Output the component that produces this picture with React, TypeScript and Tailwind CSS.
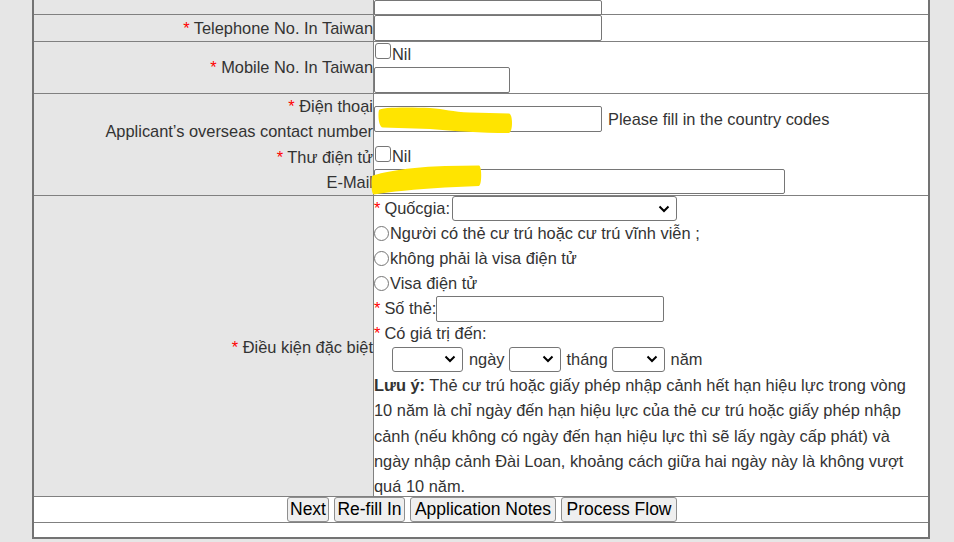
import React from 'react';

// ==================== 小元件 ====================
const Req: React.FC = () => <span className="text-[#f00]">*</span>;

const TextBox: React.FC<{ className: string }> = ({ className }) => (
  <input
    type="text"
    className={`block shrink-0 border border-[#767676] rounded-[2px] bg-white ${className}`}
  />
);

const Check: React.FC<{ className?: string }> = ({ className = '' }) => (
  <input
    type="checkbox"
    className={`appearance-none shrink-0 w-4 h-4 border border-[#767676] rounded-[3px] bg-white ${className}`}
  />
);

const Radio: React.FC = () => (
  <input
    type="radio"
    name="cond"
    className="appearance-none shrink-0 w-[15px] h-[15px] border border-[#767676] rounded-full bg-white mr-px"
  />
);

const Chevron: React.FC = () => (
  <svg
    className="absolute right-[6px] top-1/2 -translate-y-1/2"
    width="12"
    height="8"
    viewBox="0 0 12 8"
  >
    <path d="M1.5 1.5 L6 6 L10.5 1.5" fill="none" stroke="#000" strokeWidth="2" />
  </svg>
);

const Dropdown: React.FC<{ className: string }> = ({ className }) => (
  <div className={`relative shrink-0 border border-[#767676] rounded-[3px] bg-white ${className}`}>
    <select className="appearance-none w-full h-full bg-transparent outline-none" />
    <Chevron />
  </div>
);

const Row: React.FC<{
  label?: React.ReactNode;
  rowClass: string;
  cellClass?: string;
  children?: React.ReactNode;
}> = ({ label, rowClass, cellClass = '', children }) => (
  <div className={`grid grid-cols-[340px_554px] border-b border-[#808080] ${rowClass}`}>
    <div className="bg-[#e6e6e6] border-r border-[#808080] flex items-center justify-end text-right leading-[25px]">
      <div>{label}</div>
    </div>
    <div className={`bg-white ${cellClass}`}>{children}</div>
  </div>
);

const Btn: React.FC<{ w: string; children: React.ReactNode }> = ({ w, children }) => (
  <button
    className={`h-[25px] ${w} px-0 text-[17.5px] leading-none text-black bg-[#efefef] border border-[#8f8f8f] rounded-[3px]`}
  >
    {children}
  </button>
);

// ==================== 主畫面 ====================
const App: React.FC = () => {
  return (
    <div className="relative w-[954px] h-[542px] overflow-hidden bg-[#e6e6e6] font-['Liberation_Sans',Arial,sans-serif] text-[16.4px] text-[#333]">
      <div className="ml-[32px] w-[898px] border-x-2 border-b-2 border-[#737373] bg-white">
        {/* 上一列（被裁切） */}
        <Row rowClass="h-[15px] overflow-hidden" cellClass="flex items-end">
          <TextBox className="w-[228px] h-[26px]" />
        </Row>

        <Row
          rowClass="h-[27px]"
          label={
            <>
              <Req /> Telephone No. In Taiwan
            </>
          }
        >
          <TextBox className="w-[228px] h-[26px]" />
        </Row>

        <Row
          rowClass="h-[52px]"
          label={
            <>
              <Req /> Mobile No. In Taiwan
            </>
          }
        >
          <div className="flex items-start h-[25px]">
            <Check className="mt-px ml-px" />
            <span className="leading-[25px] ml-px">Nil</span>
          </div>
          <TextBox className="w-[136px] h-[26px]" />
        </Row>

        <Row
          rowClass="h-[50px]"
          cellClass="flex items-center"
          label={
            <>
              <Req /> Điện thoại
              <br />
              Applicant’s overseas contact number
            </>
          }
        >
          <TextBox className="w-[228px] h-[26px]" />
          <span className="ml-[6px]">Please fill in the country codes</span>
        </Row>

        <Row
          rowClass="h-[52px]"
          label={
            <>
              <Req /> Thư điện tử
              <br />
              E-Mail
            </>
          }
        >
          <div className="flex items-start h-[25px]">
            <Check className="mt-[2px] ml-px" />
            <span className="leading-[25px] ml-px">Nil</span>
          </div>
          <TextBox className="w-[411px] h-[25px]" />
        </Row>

        <Row
          rowClass="h-[301px] overflow-hidden"
          cellClass="leading-[25px]"
          label={
            <>
              <Req /> Điều kiện đặc biệt
            </>
          }
        >
          <div className="flex items-center h-[25px]">
            <Req />
            <span className="ml-[4px] mr-[2px]">Quốcgia:</span>
            <Dropdown className="w-[225px] h-[25px]" />
          </div>
          <div className="flex items-center h-[25px]">
            <Radio />
            <span>Người có thẻ cư trú hoặc cư trú vĩnh viễn ;</span>
          </div>
          <div className="flex items-center h-[25px]">
            <Radio />
            <span>không phải là visa điện tử</span>
          </div>
          <div className="flex items-center h-[25px]">
            <Radio />
            <span>Visa điện tử</span>
          </div>
          <div className="flex items-center h-[25px]">
            <Req />
            <span className="ml-[4px]">Số thẻ:</span>
            <TextBox className="w-[228px] h-[26px]" />
          </div>
          <div className="flex items-center h-[25px]">
            <Req />
            <span className="ml-[4px]">Có giá trị đến:</span>
          </div>
          <div className="flex items-center h-[26px] pl-[18px]">
            <Dropdown className="w-[71px] h-[25px]" />
            <span className="ml-[6px] mr-[4px]">ngày</span>
            <Dropdown className="w-[52px] h-[25px]" />
            <span className="ml-[6px] mr-[4px]">tháng</span>
            <Dropdown className="w-[53px] h-[25px]" />
            <span className="ml-[6px]">năm</span>
          </div>
          <p className="whitespace-nowrap leading-[25.25px] pt-px">
            <b>Lưu ý:</b> Thẻ cư trú hoặc giấy phép nhập cảnh hết hạn hiệu lực trong vòng
            <br />
            10 năm là chỉ ngày đến hạn hiệu lực của thẻ cư trú hoặc giấy phép nhập
            <br />
            cảnh (nếu không có ngày đến hạn hiệu lực thì sẽ lấy ngày cấp phát) và
            <br />
            ngày nhập cảnh Đài Loan, khoảng cách giữa hai ngày này là không vượt
            <br />
            quá 10 năm.
          </p>
        </Row>

        {/* 按鈕列 */}
        <div className="h-[26px] border-b border-[#808080] flex justify-center items-start gap-[5px] pl-[2px]">
          <Btn w="w-[42px]">Next</Btn>
          <Btn w="w-[71px]">Re-fill In</Btn>
          <Btn w="w-[146px]">Application Notes</Btn>
          <Btn w="w-[116px]">Process Flow</Btn>
        </div>
        <div className="h-[14px]" />
      </div>

      {/* 黃色塗抹 */}
      <svg className="absolute inset-0 pointer-events-none" width="954" height="542" viewBox="0 0 954 542">
        <path
          d="M379 110 C380 107 410 107 430 108 C445 109 452 112 470 112.5 L509 113.5 C513 114 513 132 509 133 C480 133 455 131 430 129 L383 127.5 C378 127 378 113 379 110 Z"
          fill="#ffe400"
        />
        <path
          d="M372 176 C385 171 415 167 445 166 L479 165.5 C482 166 482 185 479 186 L445 187.5 C415 189 390 192 374 194.5 C371 194 371 178 372 176 Z"
          fill="#ffe400"
        />
      </svg>
    </div>
  );
};

export default App;
